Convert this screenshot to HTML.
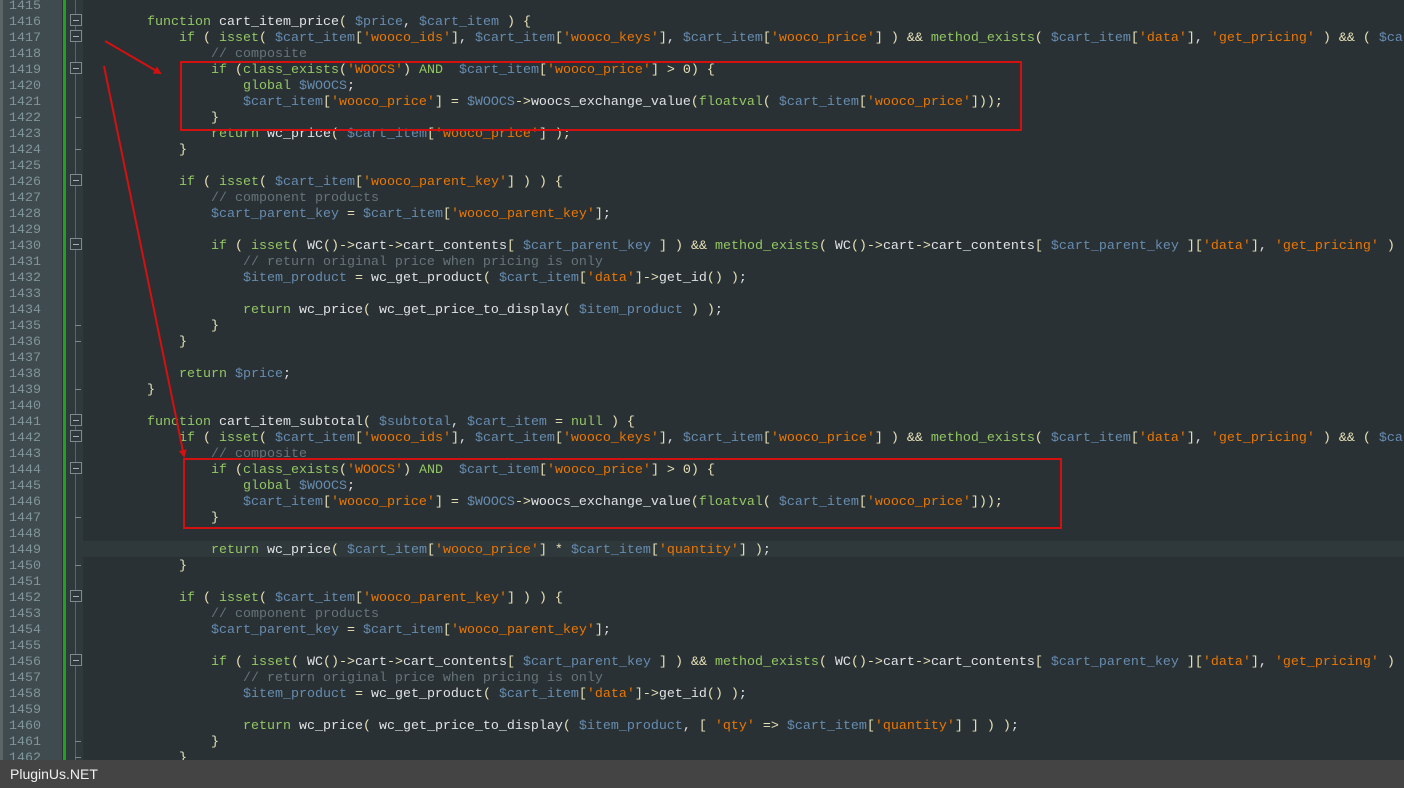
<!DOCTYPE html>
<html><head><meta charset="utf-8"><style>
body{margin:0;width:1404px;height:788px;overflow:hidden;background:#293134;position:relative;font-family:"Liberation Mono",monospace;}
#gut{position:absolute;left:0;top:0;width:62px;height:788px;background:#3f4b4e;border-left:3px solid #5b6568;box-sizing:border-box}
#green{position:absolute;left:63px;top:0;width:3px;height:788px;background:#1fa21f}
#fold{position:absolute;left:66px;top:0;width:17px;height:788px;background:#2f393c}
#fold .ln{position:absolute;left:9px;top:0;width:1px;height:788px;background:#59656a}
.fb{position:absolute;left:4px;width:10px;height:10px;border:1px solid #7d898d;background:#2f393c}
.fb:after{content:"";position:absolute;left:2px;top:5px;width:6px;height:1px;background:#aab}
.fe{position:absolute;left:9px;width:6px;height:1px;background:#7d898d}
.num,.code{position:absolute;top:-1px;font-size:13.33px;line-height:16px;white-space:pre}
.num{left:9px;color:#81969a}
.code{left:83px;color:#e0e2e4}
.k{color:#93c763}.v{color:#678cb1}.s{color:#ec7600}.c{color:#66747b}.p{color:#e8e2b7}
#hl{position:absolute;left:83px;top:541px;width:1321px;height:16px;background:#2f393c}
.box{position:absolute;border:2px solid #d41010}
#foot{position:absolute;left:0;top:760px;width:1404px;height:28px;background:#444;color:#f0f0f0;font-family:"Liberation Sans",sans-serif;font-size:14px;line-height:28px;padding-left:10px;box-sizing:border-box}
</style></head><body>
<div id="gut"></div><div id="green"></div>
<div id="fold"><div class="ln"></div>
<div class="fb" style="top:14px"></div><div class="fb" style="top:30px"></div><div class="fb" style="top:62px"></div>
<div class="fe" style="top:117px"></div><div class="fe" style="top:149px"></div>
<div class="fb" style="top:174px"></div><div class="fb" style="top:238px"></div>
<div class="fe" style="top:325px"></div><div class="fe" style="top:341px"></div><div class="fe" style="top:389px"></div>
<div class="fb" style="top:414px"></div><div class="fb" style="top:430px"></div><div class="fb" style="top:462px"></div>
<div class="fe" style="top:517px"></div><div class="fe" style="top:565px"></div>
<div class="fb" style="top:590px"></div><div class="fb" style="top:654px"></div>
<div class="fe" style="top:741px"></div><div class="fe" style="top:757px"></div>
</div>
<div id="hl"></div>
<div class="num">1415
1416
1417
1418
1419
1420
1421
1422
1423
1424
1425
1426
1427
1428
1429
1430
1431
1432
1433
1434
1435
1436
1437
1438
1439
1440
1441
1442
1443
1444
1445
1446
1447
1448
1449
1450
1451
1452
1453
1454
1455
1456
1457
1458
1459
1460
1461
1462</div>
<div class="code">
        <span class="k">function</span> cart_item_price<span class="p">(</span> <span class="v">$price</span>, <span class="v">$cart_item</span> <span class="p">) {</span>
            <span class="k">if</span> <span class="p">(</span> <span class="k">isset</span><span class="p">(</span> <span class="v">$cart_item</span><span class="p">[</span><span class="s">'wooco_ids'</span><span class="p">]</span>, <span class="v">$cart_item</span><span class="p">[</span><span class="s">'wooco_keys'</span><span class="p">]</span>, <span class="v">$cart_item</span><span class="p">[</span><span class="s">'wooco_price'</span><span class="p">] ) &amp;&amp;</span> <span class="k">method_exists</span><span class="p">(</span> <span class="v">$cart_item</span><span class="p">[</span><span class="s">'data'</span><span class="p">]</span>, <span class="s">'get_pricing'</span> <span class="p">) &amp;&amp; (</span> <span class="v">$ca</span>
                <span class="c">// composite</span>
                <span class="k">if</span> <span class="p">(</span><span class="k">class_exists</span><span class="p">(</span><span class="s">'WOOCS'</span><span class="p">)</span> <span class="k">AND</span>  <span class="v">$cart_item</span><span class="p">[</span><span class="s">'wooco_price'</span><span class="p">] &gt; 0) {</span>
                    <span class="k">global</span> <span class="v">$WOOCS</span>;
                    <span class="v">$cart_item</span><span class="p">[</span><span class="s">'wooco_price'</span><span class="p">] =</span> <span class="v">$WOOCS</span><span class="p">-&gt;</span>woocs_exchange_value<span class="p">(</span><span class="k">floatval</span><span class="p">(</span> <span class="v">$cart_item</span><span class="p">[</span><span class="s">'wooco_price'</span><span class="p">]));</span>
                <span class="p">}</span>
                <span class="k">return</span> wc_price<span class="p">(</span> <span class="v">$cart_item</span><span class="p">[</span><span class="s">'wooco_price'</span><span class="p">] );</span>
            <span class="p">}</span>

            <span class="k">if</span> <span class="p">(</span> <span class="k">isset</span><span class="p">(</span> <span class="v">$cart_item</span><span class="p">[</span><span class="s">'wooco_parent_key'</span><span class="p">] ) ) {</span>
                <span class="c">// component products</span>
                <span class="v">$cart_parent_key</span> <span class="p">=</span> <span class="v">$cart_item</span><span class="p">[</span><span class="s">'wooco_parent_key'</span><span class="p">]</span>;

                <span class="k">if</span> <span class="p">(</span> <span class="k">isset</span><span class="p">(</span> WC<span class="p">()-&gt;</span>cart<span class="p">-&gt;</span>cart_contents<span class="p">[</span> <span class="v">$cart_parent_key</span> <span class="p">] ) &amp;&amp;</span> <span class="k">method_exists</span><span class="p">(</span> WC<span class="p">()-&gt;</span>cart<span class="p">-&gt;</span>cart_contents<span class="p">[</span> <span class="v">$cart_parent_key</span> <span class="p">][</span><span class="s">'data'</span><span class="p">]</span>, <span class="s">'get_pricing'</span> <span class="p">)</span>
                    <span class="c">// return original price when pricing is only</span>
                    <span class="v">$item_product</span> <span class="p">=</span> wc_get_product<span class="p">(</span> <span class="v">$cart_item</span><span class="p">[</span><span class="s">'data'</span><span class="p">]-&gt;</span>get_id<span class="p">() )</span>;

                    <span class="k">return</span> wc_price<span class="p">(</span> wc_get_price_to_display<span class="p">(</span> <span class="v">$item_product</span> <span class="p">) )</span>;
                <span class="p">}</span>
            <span class="p">}</span>

            <span class="k">return</span> <span class="v">$price</span>;
        <span class="p">}</span>

        <span class="k">function</span> cart_item_subtotal<span class="p">(</span> <span class="v">$subtotal</span>, <span class="v">$cart_item</span> <span class="p">=</span> <span class="k">null</span> <span class="p">) {</span>
            <span class="k">if</span> <span class="p">(</span> <span class="k">isset</span><span class="p">(</span> <span class="v">$cart_item</span><span class="p">[</span><span class="s">'wooco_ids'</span><span class="p">]</span>, <span class="v">$cart_item</span><span class="p">[</span><span class="s">'wooco_keys'</span><span class="p">]</span>, <span class="v">$cart_item</span><span class="p">[</span><span class="s">'wooco_price'</span><span class="p">] ) &amp;&amp;</span> <span class="k">method_exists</span><span class="p">(</span> <span class="v">$cart_item</span><span class="p">[</span><span class="s">'data'</span><span class="p">]</span>, <span class="s">'get_pricing'</span> <span class="p">) &amp;&amp; (</span> <span class="v">$ca</span>
                <span class="c">// composite</span>
                <span class="k">if</span> <span class="p">(</span><span class="k">class_exists</span><span class="p">(</span><span class="s">'WOOCS'</span><span class="p">)</span> <span class="k">AND</span>  <span class="v">$cart_item</span><span class="p">[</span><span class="s">'wooco_price'</span><span class="p">] &gt; 0) {</span>
                    <span class="k">global</span> <span class="v">$WOOCS</span>;
                    <span class="v">$cart_item</span><span class="p">[</span><span class="s">'wooco_price'</span><span class="p">] =</span> <span class="v">$WOOCS</span><span class="p">-&gt;</span>woocs_exchange_value<span class="p">(</span><span class="k">floatval</span><span class="p">(</span> <span class="v">$cart_item</span><span class="p">[</span><span class="s">'wooco_price'</span><span class="p">]));</span>
                <span class="p">}</span>

                <span class="k">return</span> wc_price<span class="p">(</span> <span class="v">$cart_item</span><span class="p">[</span><span class="s">'wooco_price'</span><span class="p">] *</span> <span class="v">$cart_item</span><span class="p">[</span><span class="s">'quantity'</span><span class="p">] )</span>;
            <span class="p">}</span>

            <span class="k">if</span> <span class="p">(</span> <span class="k">isset</span><span class="p">(</span> <span class="v">$cart_item</span><span class="p">[</span><span class="s">'wooco_parent_key'</span><span class="p">] ) ) {</span>
                <span class="c">// component products</span>
                <span class="v">$cart_parent_key</span> <span class="p">=</span> <span class="v">$cart_item</span><span class="p">[</span><span class="s">'wooco_parent_key'</span><span class="p">]</span>;

                <span class="k">if</span> <span class="p">(</span> <span class="k">isset</span><span class="p">(</span> WC<span class="p">()-&gt;</span>cart<span class="p">-&gt;</span>cart_contents<span class="p">[</span> <span class="v">$cart_parent_key</span> <span class="p">] ) &amp;&amp;</span> <span class="k">method_exists</span><span class="p">(</span> WC<span class="p">()-&gt;</span>cart<span class="p">-&gt;</span>cart_contents<span class="p">[</span> <span class="v">$cart_parent_key</span> <span class="p">][</span><span class="s">'data'</span><span class="p">]</span>, <span class="s">'get_pricing'</span> <span class="p">)</span>
                    <span class="c">// return original price when pricing is only</span>
                    <span class="v">$item_product</span> <span class="p">=</span> wc_get_product<span class="p">(</span> <span class="v">$cart_item</span><span class="p">[</span><span class="s">'data'</span><span class="p">]-&gt;</span>get_id<span class="p">() )</span>;

                    <span class="k">return</span> wc_price<span class="p">(</span> wc_get_price_to_display<span class="p">(</span> <span class="v">$item_product</span>, <span class="p">[</span> <span class="s">'qty'</span> <span class="p">=&gt;</span> <span class="v">$cart_item</span><span class="p">[</span><span class="s">'quantity'</span><span class="p">] ] ) )</span>;
                <span class="p">}</span>
            <span class="p">}</span></div>
<div class="box" style="left:180px;top:61px;width:838px;height:66px"></div>
<div class="box" style="left:183px;top:458px;width:875px;height:67px"></div>
<svg style="position:absolute;left:0;top:0" width="1404" height="788">
<defs><marker id="a" markerWidth="8" markerHeight="8" refX="6" refY="4" orient="auto" markerUnits="userSpaceOnUse"><path d="M0,0 L8,4 L0,8 z" fill="#d41010"/></marker></defs>
<line x1="105" y1="41" x2="160" y2="73" stroke="#d41010" stroke-width="2" marker-end="url(#a)"/>
<line x1="104" y1="66" x2="184" y2="456" stroke="#d41010" stroke-width="2" marker-end="url(#a)"/>
</svg>
<div id="foot">PluginUs.NET</div>
</body></html>
